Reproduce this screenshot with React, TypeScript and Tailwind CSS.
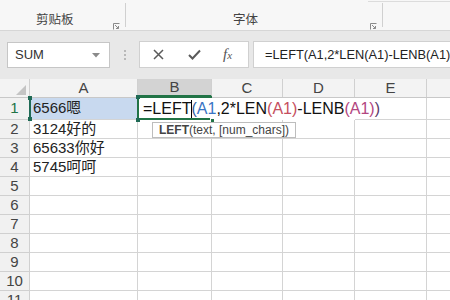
import React from 'react';

const cjk = "font-['Liberation_Sans','Noto_Sans_CJK_SC',sans-serif]";

const colW = ['w-[30px]', 'w-[108px]', 'w-[74px]', 'w-[71px]', 'w-[72px]', 'w-[72px]', 'w-[40px]'];
const cols = ['A', 'B', 'C', 'D', 'E', 'F'];
const data: Record<number, string> = { 2: '3124好的', 3: '65633你好', 4: '5745呵呵' };

function Launcher() {
  return (
    <svg width="7" height="7" viewBox="0 0 7 7" className="mt-[20px]">
      <path d="M0.5 6.5V0.5H6.5" fill="none" stroke="#8a8a8a" strokeWidth="1" />
      <path d="M2 2L5.5 5.5M3 5.5H5.5V3" fill="none" stroke="#8a8a8a" strokeWidth="1" />
    </svg>
  );
}

function Ribbon() {
  return (
    <div className="relative h-[31px] bg-[#f7f7f7] border-b border-[#d6d6d6] flex text-[12.5px] text-[#444] font-['Noto_Sans_CJK_SC',sans-serif]">
      <div className="w-[126px] flex border-r border-[#d0d0d0] my-[3px] pt-[3px]">
        <span className="ml-[36px] mt-[7px] leading-none">剪贴板</span>
        <span className="ml-auto mr-[5px] -mt-[3px]"><Launcher /></span>
      </div>
      <div className="w-[257px] flex border-r border-[#d0d0d0] my-[3px] pt-[3px]">
        <span className="ml-[107px] mt-[7px] leading-none">字体</span>
        <span className="ml-auto mr-[5px] -mt-[3px]"><Launcher /></span>
      </div>
      <div className="absolute top-[1px] left-[368px] w-[82px] h-px bg-[#dcdcdc]" />
    </div>
  );
}

function FormulaBar() {
  return (
    <div className="h-[48px] bg-[#e8e8e8] flex items-start pt-[10px] font-['Liberation_Sans',sans-serif]">
      <div className="ml-[7px] mt-[1px] w-[103px] h-[26px] shrink-0 bg-white border border-[#c6c6c6] flex items-center pl-[7px] pr-[9px] text-[13px] text-[#333]">
        SUM
        <svg width="8" height="5" viewBox="0 0 8 5" className="ml-auto">
          <path d="M0 0H8L4 4.5Z" fill="#8a8a8a" />
        </svg>
      </div>
      <div className="w-[29px] h-[27px] shrink-0 flex flex-col items-center justify-center gap-[2px]">
        <span className="w-[2px] h-[2px] bg-[#b8b8b8]" />
        <span className="w-[2px] h-[2px] bg-[#b8b8b8]" />
        <span className="w-[2px] h-[2px] bg-[#b8b8b8]" />
      </div>
      <div className="w-[110px] h-[27px] shrink-0 bg-white border border-[#d0d0d0] flex items-center">
        <svg width="11" height="11" viewBox="0 0 11 11" className="ml-[13px]">
          <path d="M1 1L10 10M10 1L1 10" stroke="#5a5a5a" strokeWidth="1.5" />
        </svg>
        <svg width="13" height="11" viewBox="0 0 13 11" className="ml-[24px]">
          <path d="M1 6L4.5 9.5L12 1.5" fill="none" stroke="#5a5a5a" strokeWidth="2" />
        </svg>
        <span className="ml-[22px] text-[15px] italic text-[#555] font-['Liberation_Serif',serif] leading-none">
          f<span className="text-[11px]">x</span>
        </span>
      </div>
      <div className="ml-[4px] flex-1 min-w-0 h-[27px] bg-white border border-[#d0d0d0] border-r-0 flex items-center pl-[11px] text-[12.8px] text-[#222] whitespace-nowrap overflow-hidden">
        =LEFT(A1,2*LEN(A1)-LENB(A1))
      </div>
    </div>
  );
}

function Formula() {
  return (
    <span className="text-[16px] text-[#111]">
      =LEFT<span className="text-[#2f5f9e]">(</span>
      <span className="text-[#3a74c4]">A1</span>,2*LEN
      <span className="text-[#c64e5e]">(A1)</span>-LENB
      <span className="text-[#b2467f]">(A1)</span>
      <span className="text-[#5a3a6a]">)</span>
    </span>
  );
}

function Grid() {
  const rows = Array.from({ length: 11 }, (_, i) => i + 1);
  return (
    <div className={`relative text-[15px] text-[#222] ${cjk}`}>
      <div className="flex h-[19px] bg-[#f3f3f3] border-b border-[#c8c8c8]">
        <div className={`${colW[0]} shrink-0 border-r border-[#d0d0d0] relative`}>
          <svg width="10" height="10" viewBox="0 0 10 10" className="absolute right-[3px] bottom-[2px]">
            <path d="M10 0V10H0Z" fill="#c4c4c4" />
          </svg>
        </div>
        {cols.map((c, i) => (
          <div
            key={c}
            className={`${colW[i + 1]} shrink-0 flex items-center justify-center border-r border-[#d0d0d0] text-[#444] ${c === 'B' ? 'bg-[#d3d3d3] border-b-2 border-b-[#217346] text-[#222]' : ''}`}
          >
            {c === 'F' ? '' : c}
          </div>
        ))}
      </div>
      {rows.map((r) => (
        <div key={r} className={`flex ${r === 1 ? 'h-[22px]' : 'h-[19px]'}`}>
          <div
            className={`${colW[0]} shrink-0 flex items-center justify-center bg-[#f1f1f1] border-r border-b border-[#d0d0d0] ${r === 1 ? 'text-[#217346] bg-[#e3e3e3]' : 'text-[#444]'}`}
          >
            {r}
          </div>
          {cols.map((c, i) => {
            if (r === 1 && c === 'A') {
              return (
                <div key={c} className={`${colW[i + 1]} shrink-0 relative bg-[#c8d9ef] border-b border-r border-[#d4d4d4] flex items-center pl-[3px]`}>
                  <div className="absolute -left-px -top-px bottom-0 w-[2px] bg-[#1f6a55]" />
                  <div className="absolute -left-[2px] -top-[2px] w-[4px] h-[4px] bg-[#1f6a55]" />
                  <div className="absolute -left-[2px] -bottom-[2px] w-[4px] h-[4px] bg-[#1f6a55]" />
                  6566嗯
                </div>
              );
            }
            if (r === 1 && c === 'B') {
              return (
                <div key={c} className={`${colW[i + 1]} shrink-0 relative z-10 flex items-center pl-[5px] whitespace-nowrap`}>
                  <div className="absolute -left-px -top-[2px] w-[75px] h-[24px] border-2 border-r-0 border-[#217346]" />
                  <div className="absolute -left-[2px] -top-[3px] w-[4px] h-[4px] bg-[#1f6a55]" />
                  <div className="absolute -left-[2px] -bottom-[2px] w-[4px] h-[4px] bg-[#1f6a55]" />
                  <div className="absolute left-[72px] -bottom-[3px] w-[5px] h-[5px] bg-[#217346] border border-white" />
                  <div className="absolute left-[53px] top-[2px] w-px h-[18px] bg-black" />
                  <span className="font-['Liberation_Sans',sans-serif]"><Formula /></span>
                </div>
              );
            }
            const noRight = r === 1 && (c === 'C' || c === 'D');
            return (
              <div
                key={c}
                className={`${colW[i + 1]} shrink-0 flex items-center pl-[3px] border-b border-[#d4d4d4] ${noRight ? '' : 'border-r'} ${r === 1 && c !== 'F' && c !== 'E' ? 'border-b-0' : ''}`}
              >
                {data[r] && c === 'A' ? data[r] : ''}
              </div>
            );
          })}
        </div>
      ))}
      <div className="absolute left-[152px] top-[43px] z-20 h-[16px] px-[6px] bg-white border border-[#bdbdbd] flex items-center text-[12px] text-[#444] font-['Liberation_Sans',sans-serif] whitespace-nowrap">
        <b className="font-bold">LEFT</b>(text, [num_chars])
      </div>
    </div>
  );
}

export default function App() {
  return (
    <div className="w-[450px] h-[300px] overflow-hidden bg-white">
      <Ribbon />
      <FormulaBar />
      <Grid />
    </div>
  );
}
